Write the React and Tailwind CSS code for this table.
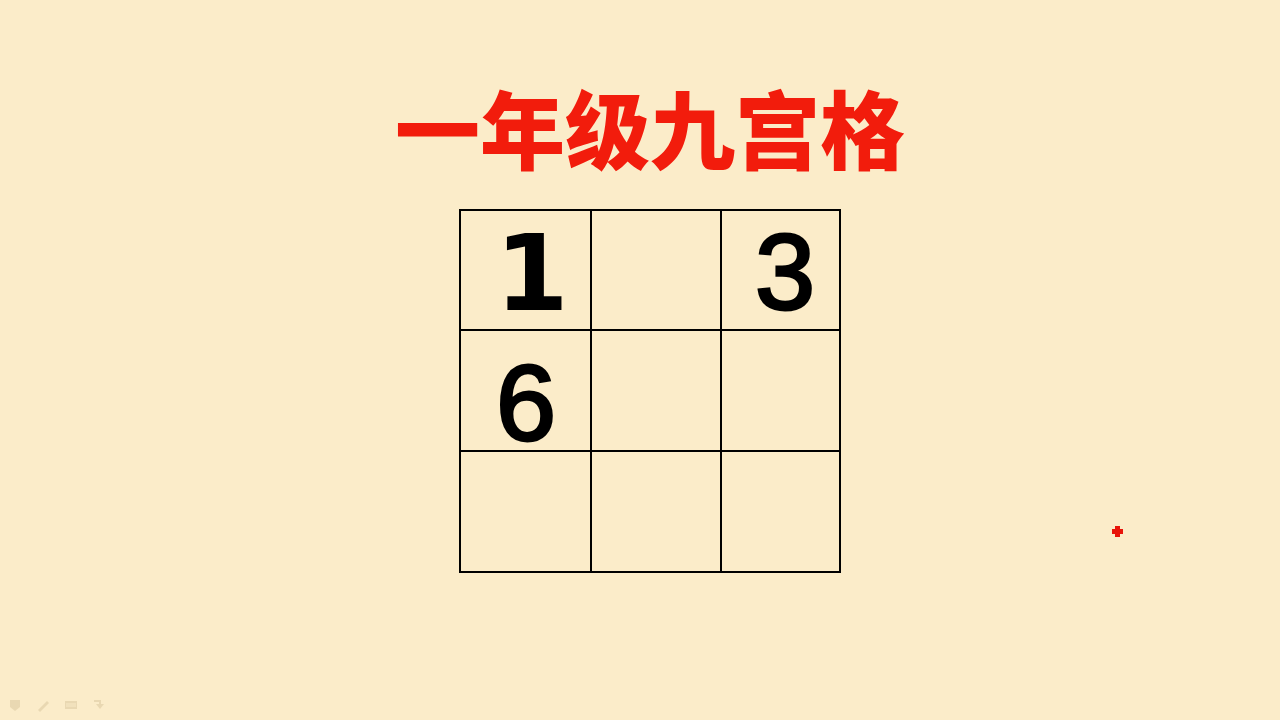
import React from "react";

const cells = [
  { n: "1", pad: "pl-[34px] pt-[18px]", font: "one" },
  { n: "" },
  { n: "3", pad: "pl-[33px] pt-[16px]" },
  { n: "6", pad: "pl-[35px] pt-[27px]" },
  { n: "" },
  { n: "" },
  { n: "" },
  { n: "" },
  { n: "" },
];

const SlideControls = () => (
  <div className="flex items-center gap-[14px] pl-[8px] pb-[8px] opacity-25">
    <svg width="14" height="14" viewBox="0 0 14 14">
      <path d="M2 2h10v7l-5 4-5-4z" fill="#b8a070" />
    </svg>
    <svg width="14" height="14" viewBox="0 0 14 14">
      <path d="M2 12l9-9 2 2-9 9z" fill="#b8a070" />
    </svg>
    <svg width="14" height="14" viewBox="0 0 14 14">
      <rect x="1" y="3" width="12" height="8" fill="#b8a070" />
      <path d="M2 6h10M2 8h10" stroke="#f6e4bd" strokeWidth="1" />
    </svg>
    <svg width="14" height="14" viewBox="0 0 14 14">
      <path d="M2 2h7v4h3l-4 5-4-5h3V4H2z" fill="#b8a070" />
    </svg>
  </div>
);

const App = () => {
  return (
    <div className="relative flex h-[720px] w-[1280px] flex-col bg-[#fbecc9]">
      <div className="flex flex-col items-center pl-[20px] pt-[76px]">
        <h1
          className="text-[85px] font-black leading-[100px] text-[#f21c0c]"
          style={{ fontFamily: '"Noto Sans CJK SC", "Noto Sans", sans-serif' }}
        >
          一年级九宫格
        </h1>
        <div className="mt-[33px] grid grid-cols-[131px_130px_117px] grid-rows-[120px_121px_119px] border-2 border-black bg-[#fbecc9]">
          {cells.map((c, i) => (
            <div
              key={i}
              className={`flex items-start border-black ${i % 3 !== 2 ? "border-r-2" : ""} ${i < 6 ? "border-b-2" : ""} ${c.pad || ""}`}
            >
              {c.font === "one" ? (
                <span
                  className="text-[106px] font-bold leading-[90px] text-black"
                  style={{ fontFamily: '"DejaVu Sans", sans-serif' }}
                >
                  {c.n}
                </span>
              ) : (
                <span
                  className="text-[108px] font-normal leading-[90px] text-black [-webkit-text-stroke:3px_black]"
                  style={{ fontFamily: '"Liberation Sans", Arial, sans-serif' }}
                >
                  {c.n}
                </span>
              )}
            </div>
          ))}
        </div>
      </div>
      <div className="absolute left-[1112px] top-[526px] h-[11px] w-[11px]">
        <div className="absolute left-[3px] top-0 h-[11px] w-[5px] bg-[#e8140a]" />
        <div className="absolute left-0 top-[3px] h-[5px] w-[11px] bg-[#e8140a]" />
      </div>
      <div className="mt-auto">
        <SlideControls />
      </div>
    </div>
  );
};

export default App;
